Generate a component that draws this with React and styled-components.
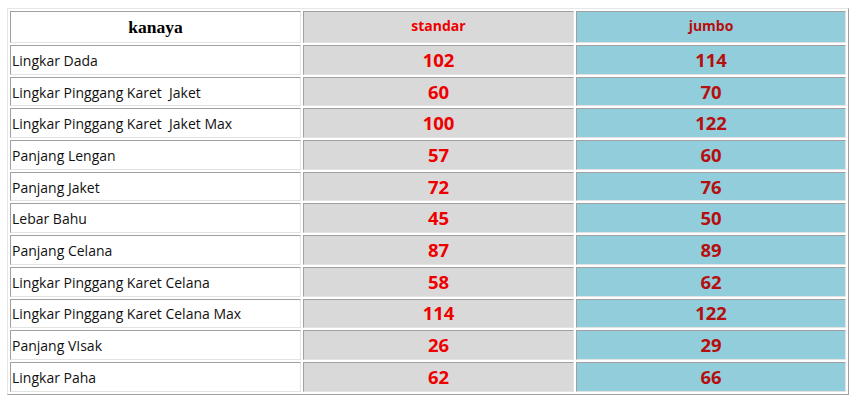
import React from "react";
import styled, { createGlobalStyle } from "styled-components";

const Global = createGlobalStyle`
  html, body { margin: 0; padding: 0; background: #fff; }
  body { font-family: "Open Sans", "Liberation Sans", sans-serif; }
`;

const Page = styled.div`
  padding: 8px 0 0 7px;
`;

const Frame = styled.div`
  position: relative;
  width: 841px;
`;

const Table = styled.table`
  border-collapse: separate;
  border-spacing: 2px;
  table-layout: fixed;
  width: 841px;
  border: 1px solid;
  border-color: #e6e6e6 #a0a0a0 #a0a0a0 #e6e6e6;
`;

const Cell = styled.td`
  box-sizing: border-box;
  border: 1px solid;
  border-color: #a0a0a0 #e3e3e3 #e3e3e3 #a0a0a0;
  padding: 0 1px;
  height: ${(p) => (p.$head ? "32px" : "29.7px")};
  background: ${(p) =>
    p.$tone === "gray" ? "#d9d9d9" : p.$tone === "blue" ? "#92cddc" : "#ffffff"};
  vertical-align: middle;
  overflow: hidden;
  white-space: nowrap;
`;

const Label = styled.span`
  font-family: "Open Sans", "Liberation Sans", sans-serif;
  font-size: 14px;
  color: #111;
`;

const Brand = styled.div`
  text-align: center;
  font-family: "Liberation Serif", "Times New Roman", serif;
  font-weight: bold;
  font-size: 17.5px;
  color: #000;
`;

const HeadText = styled.div`
  text-align: center;
  font-family: "Open Sans", "Liberation Sans", sans-serif;
  font-weight: bold;
  font-size: 14px;
  color: ${(p) => p.$color};
  padding-bottom: 4px;
`;

const Num = styled.div`
  text-align: center;
  font-family: "Open Sans", "Liberation Sans", sans-serif;
  font-weight: bold;
  font-size: 18.5px;
  color: ${(p) => p.$color};
  padding-bottom: 1px;
`;

const Handle = styled.div`
  position: absolute;
  left: 838px;
  top: calc(100% + 1px);
  width: 5px;
  height: 5px;
  border: 1px solid #7a7a7a;
  background: #fff;
`;

const rows = [
  ["Lingkar Dada", 102, 114],
  ["Lingkar Pinggang Karet  Jaket", 60, 70],
  ["Lingkar Pinggang Karet  Jaket Max", 100, 122],
  ["Panjang Lengan", 57, 60],
  ["Panjang Jaket", 72, 76],
  ["Lebar Bahu", 45, 50],
  ["Panjang Celana", 87, 89],
  ["Lingkar Pinggang Karet Celana", 58, 62],
  ["Lingkar Pinggang Karet Celana Max", 114, 122],
  ["Panjang VIsak", 26, 29],
  ["Lingkar Paha", 62, 66],
];

const RED = "#ee0000";
const DARK_RED = "#b50f0f";

export default function App() {
  return (
    <Page>
      <Global />
      <Frame>
        <Table>
          <colgroup>
            <col style={{ width: "291px" }} />
            <col style={{ width: "271px" }} />
            <col style={{ width: "270px" }} />
          </colgroup>
          <thead>
            <tr>
              <Cell as="th" $head>
                <Brand>kanaya</Brand>
              </Cell>
              <Cell as="th" $head $tone="gray">
                <HeadText $color={RED}>standar</HeadText>
              </Cell>
              <Cell as="th" $head $tone="blue">
                <HeadText $color={DARK_RED}>jumbo</HeadText>
              </Cell>
            </tr>
          </thead>
          <tbody>
            {rows.map(([name, s, j]) => (
              <tr key={name}>
                <Cell>
                  <Label>{name.replace(/  /g, "\u00a0 ")}</Label>
                </Cell>
                <Cell $tone="gray">
                  <Num $color={RED}>{s}</Num>
                </Cell>
                <Cell $tone="blue">
                  <Num $color={DARK_RED}>{j}</Num>
                </Cell>
              </tr>
            ))}
          </tbody>
        </Table>
        <Handle />
      </Frame>
    </Page>
  );
}
